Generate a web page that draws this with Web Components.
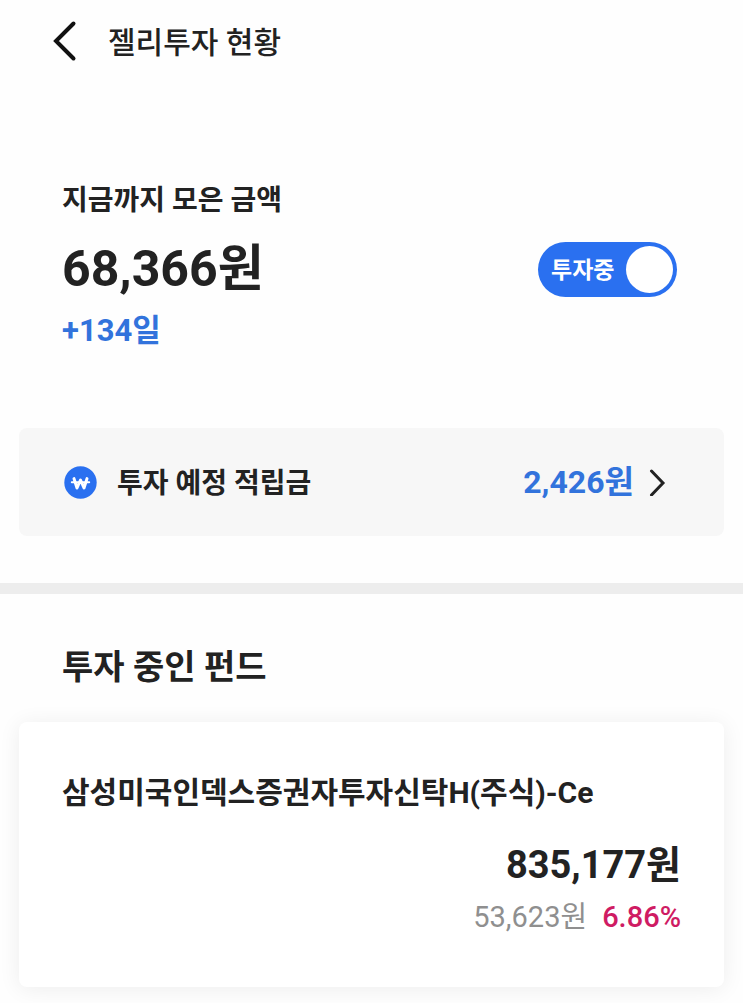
<!DOCTYPE html>
<html lang="ko">
<head>
<meta charset="utf-8">
<meta name="viewport" content="width=device-width, initial-scale=1">
<title>젤리투자 현황</title>
<style>
  body {
    margin: 0;
    background: #fefefe;
    color: #222;
    font-family: Roboto, "Noto Sans CJK KR", sans-serif;
    --blue: #2a70f0;
    --blue-text: #3273dc;
    --gutter: 62px;
    --inset: 19px;
  }
</style>
</head>
<body>
<jelly-app></jelly-app>

<template id="t-app">
  <style>
    :host { display: block; padding-bottom: 16px; }
    hr { margin: 0; border: 0; height: 11px; background: #ededed; }
    main { display: block; }
    .pending { padding: 79px var(--inset) 47px; }
    h2 { margin: 0; padding: 51px var(--gutter) 33px; font-size: 34px; line-height: 44px; font-weight: 700; }
    .funds { padding: 0 var(--inset); }
  </style>
  <page-header>젤리투자 현황</page-header>
  <main>
    <savings-summary>
      <span slot="label">지금까지 모은 금액</span>
      <span slot="amount">68,366원</span>
      <span slot="days">+134일</span>
      <invest-switch slot="action"></invest-switch>
    </savings-summary>
    <div class="pending">
      <pending-row>투자 예정 적립금<span slot="amount">2,426원</span></pending-row>
    </div>
    <hr>
    <section>
      <h2>투자 중인 펀드</h2>
      <div class="funds">
        <fund-card>
          <span slot="name">삼성미국인덱스증권자투자신탁H(주식)-Ce</span>
          <span slot="value">835,177원</span>
          <span slot="gain">53,623원</span>
          <span slot="rate">6.86%</span>
        </fund-card>
      </div>
    </section>
  </main>
</template>

<template id="t-header">
  <style>
    :host { display: block; }
    header { display: flex; align-items: center; gap: 20px; height: 82px; padding: 0 48px; }
    button { display: flex; margin: 0; padding: 0; border: 0; background: none; color: #111; cursor: pointer; }
    h1 { margin: 0; padding-top: 3px; font-size: 30px; line-height: 40px; font-weight: 500; }
  </style>
  <header>
    <button type="button" aria-label="뒤로">
      <svg width="40" height="44" viewBox="0 0 40 44" fill="none" stroke="currentColor" stroke-width="4" stroke-linecap="round" stroke-linejoin="miter"><path d="M25.500 4.500 8 22 25.500 39.500"/></svg>
    </button>
    <h1><slot></slot></h1>
  </header>
</template>

<template id="t-summary">
  <style>
    :host { display: block; padding: 101px var(--gutter) 0; }
    .label { margin: 0; font-size: 28px; line-height: 36px; font-weight: 700; }
    .row { display: flex; align-items: center; justify-content: space-between; margin: 20px 0 14px; padding-right: 4px; }
    .amount { margin: 0; font-size: 50px; line-height: 60px; font-weight: 700; }
    .days { margin: 0; font-size: 31px; line-height: 36px; font-weight: 700; color: var(--blue-text); }
  </style>
  <p class="label"><slot name="label"></slot></p>
  <div class="row">
    <p class="amount"><slot name="amount"></slot></p>
    <slot name="action"></slot>
  </div>
  <p class="days"><slot name="days"></slot></p>
</template>

<template id="t-switch">
  <style>
    :host { display: block; }
    label {
      position: relative; display: flex; align-items: center; justify-content: space-between;
      box-sizing: border-box; width: 139px; height: 55px; padding: 0 4px 0 13px;
      border-radius: 28px; background: #9a9a9a; color: #fff; cursor: pointer;
      font-size: 23px; line-height: 32px; font-weight: 700;
    }
    label:has(input:checked) { background: var(--blue); }
    label:has(input:not(:checked)) { flex-direction: row-reverse; padding: 0 13px 0 4px; }
    input { position: absolute; inset: 0; margin: 0; width: 100%; height: 100%; appearance: none; border-radius: 28px; cursor: pointer; }
    span { padding-top: 4px; }
    i { width: 47px; height: 47px; border-radius: 50%; background: #fff; }
  </style>
  <label><input type="checkbox" role="switch" checked><span>투자중</span><i></i></label>
</template>

<template id="t-pending">
  <style>
    :host { display: block; }
    a {
      display: flex; align-items: center; height: 108px; padding: 0 58px 0 45px;
      border-radius: 8px; background: #f7f7f7; color: inherit; text-decoration: none;
    }
    .name { flex: 1; margin-left: 20px; padding-top: 4px; font-size: 28px; line-height: 36px; font-weight: 700; }
    .amount { margin-right: 15px; font-size: 32px; line-height: 40px; font-weight: 700; color: var(--blue-text); }
    svg { flex: none; display: block; }
    .coin { color: var(--blue); }
  </style>
  <a href="#pending">
    <svg class="coin" width="33" height="33" viewBox="0 0 33 33" aria-hidden="true">
      <circle cx="16.500" cy="16.500" r="16.200" fill="currentColor"/>
      <path d="M10 12.600 13 22 16.500 14 20 22 23 12.600" fill="none" stroke="#fff" stroke-width="3" stroke-linecap="round" stroke-linejoin="round"/>
      <path d="M7.800 16.200H25.200" stroke="#fff" stroke-width="2" stroke-linecap="round"/>
    </svg>
    <span class="name"><slot></slot></span>
    <span class="amount"><slot name="amount"></slot></span>
    <svg width="17" height="28" viewBox="0 0 17 28" fill="none" stroke="#222" stroke-width="3" stroke-linecap="round" aria-hidden="true"><path d="M2.500 3 14 15 2.500 27"/></svg>
  </a>
</template>

<template id="t-fund">
  <style>
    :host { display: block; }
    article {
      padding: 51px 43px 52px; border-radius: 8px; background: #fff;
      box-shadow: 0 2px 22px rgba(0, 0, 0, .07);
    }
    h3, p { margin: 0; }
    h3 { font-size: 30px; line-height: 40px; font-weight: 700; }
    .value { margin: 28px 0 10px; font-size: 38px; line-height: 48px; font-weight: 700; text-align: right; }
    .change { display: flex; justify-content: flex-end; gap: 15px; font-size: 29px; line-height: 36px; }
    .gain { color: #8f8f8f; }
    .rate { color: #cf1b63; font-weight: 500; }
  </style>
  <article>
    <h3><slot name="name"></slot></h3>
    <p class="value"><slot name="value"></slot></p>
    <p class="change"><span class="gain"><slot name="gain"></slot></span><span class="rate"><slot name="rate"></slot></span></p>
  </article>
</template>

<script>
  const define = (name, templateId) => customElements.define(name, class extends HTMLElement {
    constructor() {
      super();
      this.attachShadow({ mode: 'open' })
        .append(document.getElementById(templateId).content.cloneNode(true));
    }
  });
  define('page-header', 't-header');
  define('invest-switch', 't-switch');
  define('savings-summary', 't-summary');
  define('pending-row', 't-pending');
  define('fund-card', 't-fund');
  define('jelly-app', 't-app');
</script>
</body>
</html>
